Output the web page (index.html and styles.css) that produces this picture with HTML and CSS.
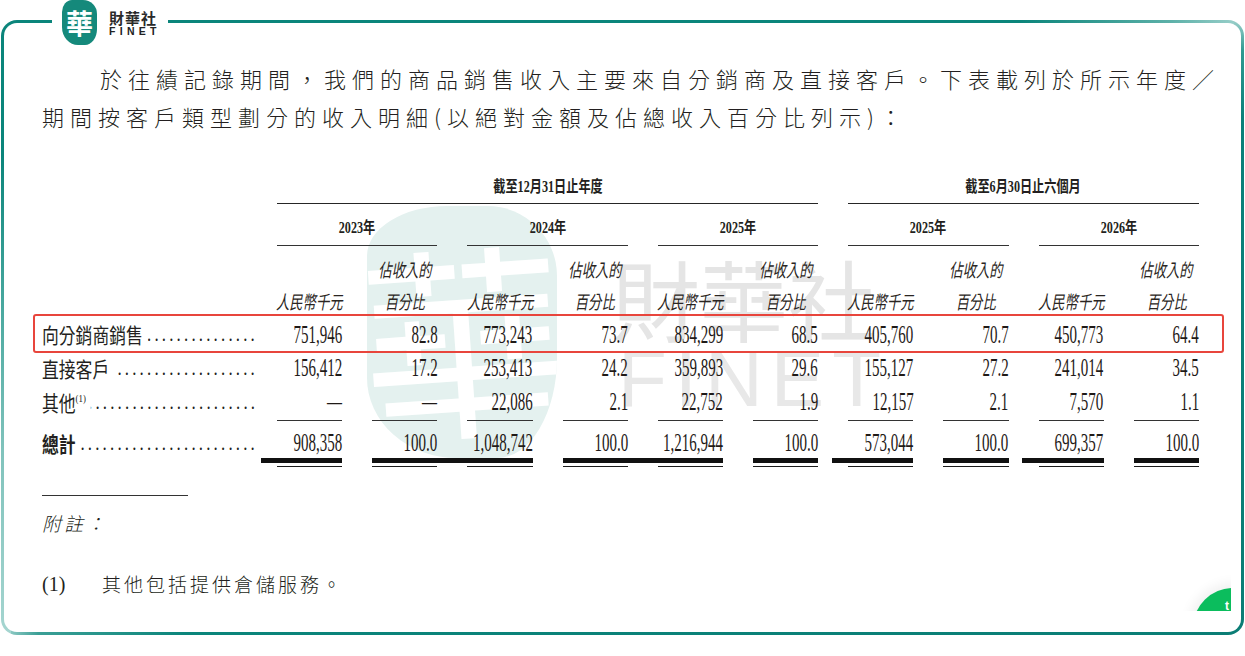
FILE: index.html
```html
<!DOCTYPE html>
<html lang="zh-Hant">
<head>
<meta charset="utf-8">
<title>收入明細</title>
<link rel="stylesheet" href="styles.css">
</head>
<body>
<div class="page">
  <div class="frame">
    <div class="sheet">
      <div class="wm-blob"><span>華</span></div>
      <div class="wm-cn">財華社</div>
      <div class="wm-en">FINET</div>

      <p class="intro">於往績記錄期間，我們的商品銷售收入主要來自分銷商及直接客戶。下表載列於所示年度／<br>期間按客戶類型劃分的收入明細(以絕對金額及佔總收入百分比列示)：</p>

      <div class="tbl">
        <div></div>
        <div class="hp s6"><span>截至12月31日止年度</span></div>
        <div class="hp s4"><span>截至6月30日止六個月</span></div>

        <div></div>
        <div class="hy"><span>2023年</span></div>
        <div class="hy"><span>2024年</span></div>
        <div class="hy"><span>2025年</span></div>
        <div class="hy"><span>2025年</span></div>
        <div class="hy"><span>2026年</span></div>

        <div></div>
        <div class="hs"><span>人民幣千元</span></div>
        <div class="hs"><span>佔收入的</span><span>百分比</span></div>
        <div class="hs"><span>人民幣千元</span></div>
        <div class="hs"><span>佔收入的</span><span>百分比</span></div>
        <div class="hs"><span>人民幣千元</span></div>
        <div class="hs"><span>佔收入的</span><span>百分比</span></div>
        <div class="hs"><span>人民幣千元</span></div>
        <div class="hs"><span>佔收入的</span><span>百分比</span></div>
        <div class="hs"><span>人民幣千元</span></div>
        <div class="hs"><span>佔收入的</span><span>百分比</span></div>

        <div class="lc r1"><div class="lab"><span class="lt">向分銷商銷售</span><span class="dots">........................................</span></div></div>
        <div class="n r1"><span>751,946</span></div>
        <div class="n r1"><span>82.8</span></div>
        <div class="n r1"><span>773,243</span></div>
        <div class="n r1"><span>73.7</span></div>
        <div class="n r1"><span>834,299</span></div>
        <div class="n r1"><span>68.5</span></div>
        <div class="n r1"><span>405,760</span></div>
        <div class="n r1"><span>70.7</span></div>
        <div class="n r1"><span>450,773</span></div>
        <div class="n r1"><span>64.4</span></div>

        <div class="lc r2"><div class="lab"><span class="lt">直接客戶</span><span class="dots">........................................</span></div></div>
        <div class="n r2"><span>156,412</span></div>
        <div class="n r2"><span>17.2</span></div>
        <div class="n r2"><span>253,413</span></div>
        <div class="n r2"><span>24.2</span></div>
        <div class="n r2"><span>359,893</span></div>
        <div class="n r2"><span>29.6</span></div>
        <div class="n r2"><span>155,127</span></div>
        <div class="n r2"><span>27.2</span></div>
        <div class="n r2"><span>241,014</span></div>
        <div class="n r2"><span>34.5</span></div>

        <div class="lc r3"><div class="lab"><span class="lt">其他<sup>(1)</sup></span><span class="dots">........................................</span></div></div>
        <div class="n r3"><span>—</span></div>
        <div class="n r3"><span>—</span></div>
        <div class="n r3"><span>22,086</span></div>
        <div class="n r3"><span>2.1</span></div>
        <div class="n r3"><span>22,752</span></div>
        <div class="n r3"><span>1.9</span></div>
        <div class="n r3"><span>12,157</span></div>
        <div class="n r3"><span>2.1</span></div>
        <div class="n r3"><span>7,570</span></div>
        <div class="n r3"><span>1.1</span></div>

        <div class="lc rt"><div class="lab"><span class="lt strong">總計</span><span class="dots">........................................</span></div></div>
        <div class="n rt"><div class="u"><span>908,358</span></div></div>
        <div class="n rt"><div class="u"><span>100.0</span></div></div>
        <div class="n rt"><div class="u"><span>1,048,742</span></div></div>
        <div class="n rt"><div class="u"><span>100.0</span></div></div>
        <div class="n rt"><div class="u"><span>1,216,944</span></div></div>
        <div class="n rt"><div class="u"><span>100.0</span></div></div>
        <div class="n rt"><div class="u"><span>573,044</span></div></div>
        <div class="n rt"><div class="u"><span>100.0</span></div></div>
        <div class="n rt"><div class="u"><span>699,357</span></div></div>
        <div class="n rt"><div class="u"><span>100.0</span></div></div>
      </div>

      <div class="rule"></div>
      <p class="note-title">附註：</p>
      <p class="note"><span class="note-no">(1)</span><span>其他包括提供倉儲服務。</span></p>
    </div>
  </div>

  <div class="logo">
    <div class="logo-mark"><span>華</span></div>
    <div class="logo-words">
      <div class="logo-cn">財華社</div>
      <div class="logo-en">FINET</div>
    </div>
  </div>

  <div class="hl"></div>

  <div class="fab"><div class="fab-circle"></div><span class="fab-ic">t</span></div>
</div>
</body>
</html>
```

FILE: styles.css
```css
* { box-sizing: border-box; }

html, body {
  margin: 0;
  padding: 0;
  background: #fff;
}

body {
  width: 1245px;
  height: 656px;
  overflow: hidden;
  font-family: "Noto Sans CJK TC", "Noto Sans CJK SC", sans-serif;
  color: #231f20;
}

.page {
  position: relative;
  width: 1245px;
  height: 656px;
  padding: 20px 0 0 1px;
}

/* teal rounded frame */
.frame {
  width: 1243px;
  height: 615px;
  padding: 3px;
  border-radius: 16px;
  background:
    linear-gradient(to bottom, #0b857b 0%, #0b857b 22%, #45a69d 45%, #80c3bc 70%, #a5d5d0 100%) left top / 10px 100% no-repeat,
    linear-gradient(to bottom, #9ccfca 0%, #2f9a91 5%, #0b807a 16%, #0b7d75 100%) right top / 10px 100% no-repeat,
    linear-gradient(to right, #0b857b 0%, #0b857b 82%, #5cb0a8 94%, #9fd2cd 100%) left top / 100% 10px no-repeat,
    linear-gradient(to right, #a5d5d0 0%, #3b9f96 3%, #0b857b 15%, #0b7d75 100%) left bottom / 100% 10px no-repeat,
    #0b857b;
}

.sheet {
  position: relative;
  z-index: 0;
  height: 100%;
  background: #fff;
  border-radius: 13px;
  padding: 36px 0 0 38px;
}

/* watermark */
.wm-blob {
  position: absolute;
  z-index: -1;
  left: 363px;
  top: 183px;
  width: 190px;
  height: 252px;
  background: #e4f1ef;
  border-radius: 80px 70px 60px 90px / 50px 70px 100px 80px;
  display: flex;
  align-items: center;
  justify-content: center;
  overflow: hidden;
}

.wm-blob span {
  color: #fff;
  font-size: 205px;
  font-weight: 400;
  line-height: 1;
  transform: rotate(-4deg);
}

.wm-cn {
  position: absolute;
  z-index: -1;
  left: 608px;
  top: 230px;
  font-size: 88px;
  line-height: 1;
  color: #e5e5e5;
}

.wm-en {
  position: absolute;
  z-index: -1;
  left: 614px;
  top: 316px;
  font-family: "Liberation Sans", sans-serif;
  font-size: 80px;
  line-height: 1;
  letter-spacing: 8px;
  color: #e8e8e8;
}

/* intro paragraph */
.intro {
  margin: 0;
  font-size: 22px;
  font-weight: 300;
  line-height: 38px;
  letter-spacing: 6px;
  text-indent: 58px;
  white-space: nowrap;
}

/* table */
.tbl {
  display: grid;
  grid-template-columns: 235px repeat(10, 95.2px);
  margin-top: 42px;
}

.hp {
  margin-right: 30px;
  line-height: 20px;
  padding-bottom: 6px;
  border-bottom: 1.5px solid #262626;
  display: flex;
  justify-content: center;
  font-family: "Liberation Serif", "Noto Sans CJK TC", serif;
  font-size: 16px;
  font-weight: 700;
}

.hp.s6 { grid-column: span 6; }
.hp.s4 { grid-column: span 4; }

.hp span,
.hy span {
  display: inline-block;
  white-space: nowrap;
  transform: scaleX(0.76);
}

.hy {
  grid-column: span 2;
  margin-right: 30px;
  margin-top: 14px;
  line-height: 20px;
  padding-bottom: 6.5px;
  border-bottom: 1.5px solid #333;
  display: flex;
  justify-content: center;
  font-family: "Liberation Serif", "Noto Sans CJK TC", serif;
  font-size: 16px;
  font-weight: 700;
}

.hs {
  margin-right: 30px;
  margin-top: 7px;
  height: 65px;
  display: flex;
  flex-direction: column;
  justify-content: flex-end;
  align-items: center;
  font-size: 18.5px;
  font-style: italic;
  line-height: 32.5px;
  color: #2a2522;
}

.hs span {
  display: block;
  height: 32.5px;
  white-space: nowrap;
  transform: scaleX(0.72);
}

/* row labels */
.lab {
  width: 270px;
  display: flex;
  transform: scaleX(0.8);
  transform-origin: 0 50%;
  font-size: 21px;
  white-space: nowrap;
}

.lt { flex: none; }
.lt.strong { font-weight: 700; }

.lt sup {
  font-family: "Liberation Serif", serif;
  font-size: 11px;
  line-height: 0;
  vertical-align: 9px;
}

.dots {
  flex: 1;
  min-width: 0;
  margin-left: 6px;
  overflow: hidden;
  direction: rtl;
  font-family: "Liberation Serif", serif;
  letter-spacing: 4px;
}

/* numbers */
.n {
  margin-right: 30px;
  display: flex;
  justify-content: flex-end;
  font-family: "Liberation Serif", serif;
  font-size: 25px;
  color: #1f1a17;
}

.n span {
  display: inline-block;
  white-space: nowrap;
  transform: scaleX(0.6);
  transform-origin: 100% 50%;
}

.r1 { height: 33px; line-height: 33px; }
.r2 { height: 34px; line-height: 34px; }
.r3 { line-height: 34px; }
.n.r3 {
  padding-bottom: 1.5px;
  border-bottom: 1.3px solid #333;
}

.rt {
  margin-top: 7px;
  line-height: 30px;
}

.n.rt {
  padding-bottom: 2.5px;
  border-bottom: 1.8px solid #1a1a1a;
}

.u {
  flex: 1;
  display: flex;
  justify-content: flex-end;
  border-bottom: 5px solid #111;
}

/* notes */
.rule {
  width: 146px;
  height: 0;
  margin-top: 28px;
  border-top: 1.3px solid #333;
}

.note-title {
  margin: 12px 0 0;
  font-size: 19px;
  line-height: 30px;
  font-style: italic;
  font-weight: 300;
  letter-spacing: 3px;
}

.note {
  margin: 31px 0 0;
  display: flex;
  font-size: 19px;
  font-weight: 300;
  line-height: 30px;
  letter-spacing: 3px;
}

.note-no {
  width: 60px;
  font-family: "Liberation Serif", serif;
  font-size: 20px;
  font-weight: 400;
  letter-spacing: 0;
}

/* logo over top border */
.logo {
  position: absolute;
  left: 52px;
  top: 0;
  width: 116px;
  height: 46px;
  background: #fff;
  display: flex;
  align-items: flex-start;
  gap: 12px;
  padding-left: 10px;
}

.logo-mark {
  width: 35px;
  height: 45px;
  background: #15897b;
  border-radius: 10px 14px 12px 16px / 12px 14px 16px 18px;
  display: flex;
  align-items: center;
  justify-content: center;
  color: #fff;
  font-size: 27px;
  font-weight: 700;
  line-height: 1;
}

.logo-words { padding-top: 10px; }

.logo-cn {
  font-size: 15px;
  font-weight: 700;
  line-height: 15px;
  letter-spacing: 1px;
  color: #2a2a2a;
}

.logo-en {
  margin-top: 1px;
  font-family: "Liberation Sans", sans-serif;
  font-size: 10.5px;
  font-weight: 700;
  line-height: 10px;
  letter-spacing: 4.3px;
  color: #222;
}

/* red highlight annotation */
.hl {
  position: absolute;
  left: 33px;
  top: 314px;
  width: 1191px;
  height: 39px;
  border: 2.5px solid #e8453c;
  border-radius: 3px;
}

/* clipped floating button */
.fab {
  position: absolute;
  left: 1180px;
  top: 572px;
  width: 51px;
  height: 39px;
  overflow: hidden;
}

.fab-circle {
  position: absolute;
  left: 13px;
  top: 16px;
  width: 80px;
  height: 80px;
  border-radius: 50%;
  background: #0bbd5d;
  box-shadow: 0 0 12px 5px rgba(0, 0, 0, 0.06);
}

.fab-ic {
  position: absolute;
  left: 45px;
  top: 28px;
  font-family: "Liberation Sans", sans-serif;
  font-size: 12px;
  font-weight: 700;
  line-height: 1;
  color: #fff;
}
```
